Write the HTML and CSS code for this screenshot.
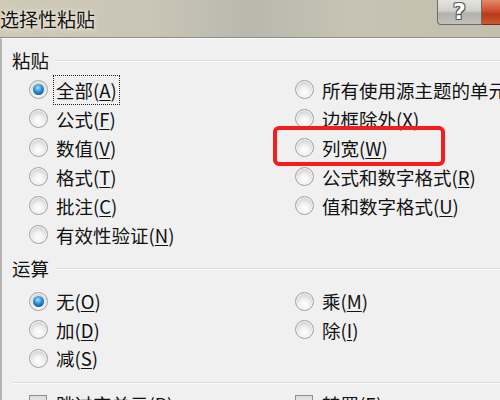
FILE: index.html
```html
<!DOCTYPE html>
<html lang="zh-CN">
<head>
  <meta charset="UTF-8">
  <meta name="viewport" content="width=device-width, initial-scale=1.0">
  <title>选择性粘贴</title>
  <link rel="stylesheet" href="styles.css">
</head>
<body>
  <div class="window">
    <div class="titlebar">
      <span class="title">选择性粘贴</span>
      <div class="caption-buttons">
        <span class="btn-help">?</span>
        <span class="btn-close"></span>
      </div>
    </div>

    <div class="content">
      <div class="group-head">
        <span class="group-label">粘贴</span>
        <span class="group-line"></span>
      </div>
      <div class="options paste">
        <label class="opt"><span class="radio checked"></span><span class="focus">全部(<u>A</u>)</span></label>
        <label class="opt"><span class="radio"></span>所有使用源主题的单元(<u>H</u>)</label>
        <label class="opt"><span class="radio"></span>公式(<u>F</u>)</label>
        <label class="opt"><span class="radio"></span>边框除外(<u>X</u>)</label>
        <label class="opt"><span class="radio"></span>数值(<u>V</u>)</label>
        <label class="opt"><span class="radio"></span>列宽(<u>W</u>)</label>
        <label class="opt"><span class="radio"></span>格式(<u>T</u>)</label>
        <label class="opt"><span class="radio"></span>公式和数字格式(<u>R</u>)</label>
        <label class="opt"><span class="radio"></span>批注(<u>C</u>)</label>
        <label class="opt"><span class="radio"></span>值和数字格式(<u>U</u>)</label>
        <label class="opt"><span class="radio"></span>有效性验证(<u>N</u>)</label>
        <span class="mark"></span>
      </div>

      <div class="group-head op-head">
        <span class="group-label">运算</span>
        <span class="group-line"></span>
      </div>
      <div class="options ops">
        <label class="opt"><span class="radio checked"></span>无(<u>O</u>)</label>
        <label class="opt"><span class="radio"></span>乘(<u>M</u>)</label>
        <label class="opt"><span class="radio"></span>加(<u>D</u>)</label>
        <label class="opt"><span class="radio"></span>除(<u>I</u>)</label>
        <label class="opt"><span class="radio"></span>减(<u>S</u>)</label>
      </div>

      <div class="separator"></div>
      <div class="options checks">
        <label class="opt"><span class="check"></span>跳过空单元(<u>B</u>)</label>
        <label class="opt"><span class="check"></span>转置(<u>E</u>)</label>
      </div>
    </div>
  </div>
</body>
</html>
```

FILE: styles.css
```css
body {
    margin: 0;
    font-family: "Noto Sans CJK SC", "Noto Sans", sans-serif;
    background: #f0f0f0;
}

.window {
    width: 500px;
    height: 400px;
    overflow: hidden;
    background: #f0f0f0;
}

.titlebar {
    height: 37px;
    display: flex;
    justify-content: space-between;
    align-items: flex-start;
    background: linear-gradient(90deg, #cfc9b6 0%, #c9c5b7 30%, #b9b8ad 50%, #c6c3b4 70%, #c2bfae 100%);
    border-bottom: 1px solid #8e8d86;
}

.title {
    font-size: 19px;
    line-height: 20px;
    margin-top: 9px;
    color: #111;
    text-shadow: 0 0 6px #f4f1e6, 0 0 3px #f4f1e6;
}

.caption-buttons {
    display: flex;
    height: 25px;
}

.btn-help {
    width: 43px;
    height: 24px;
    border: 1px solid #6c6c68;
    border-top: none;
    border-radius: 0 0 0 4px;
    background: linear-gradient(#e4e3de 0%, #d2d1cb 45%, #b2b1aa 55%, #c2c1bb 100%);
    color: #fff;
    font: bold 22px/24px "DejaVu Sans", sans-serif;
    text-align: center;
    text-shadow: 0 0 1px #333, 1px 1px 0 #555, -1px -1px 0 #666, 1px -1px 0 #666, -1px 1px 0 #666;
}

.btn-close {
    width: 18px;
    height: 24px;
    border-bottom: 1px solid #6c3020;
    background: linear-gradient(#e08a6c 0%, #d0502e 45%, #b8381a 60%, #cc5a30 100%);
}

.content {
    border-left: 2px solid #b4b4b4;
    border-top: 1px solid #fafafa;
    height: 400px;
}

.group-head {
    display: flex;
    align-items: center;
    height: 30px;
    margin-top: 6px;
    padding-left: 10px;
}

.group-label {
    font-size: 18.5px;
    color: #111;
}

.group-line {
    flex: 1;
    height: 1px;
    margin-left: 6px;
    background: #d5dfe5;
    box-shadow: 0 1px 0 #fbfbfb;
}

.op-head {
    margin-top: 4px;
}

.options {
    display: grid;
    grid-template-columns: 266px 1fr;
    padding-left: 27px;
    grid-auto-rows: 29px;
}

.paste {
    position: relative;
}

.ops {
    margin-top: 4px;
    grid-auto-rows: 28.5px;
}

.opt {
    display: flex;
    align-items: center;
    font-size: 18.5px;
    color: #111;
    white-space: nowrap;
}

.opt u {
    text-underline-offset: 2px;
}

.radio {
    flex: none;
    width: 17px;
    height: 17px;
    margin-right: 8px;
    border: 1px solid #a2a2a2;
    border-radius: 50%;
    background: radial-gradient(circle at 50% 65%, #ffffff 0%, #f2f2f2 35%, #d2d2d2 72%, #e4e4e4 100%);
    box-shadow: inset 0 0 0 1px #f6f6f6;
    position: relative;
}

.radio.checked::after {
    content: "";
    position: absolute;
    left: 3px;
    top: 3px;
    width: 11px;
    height: 11px;
    border-radius: 50%;
    background: radial-gradient(circle at 45% 35%, #b9e4ff 0%, #3b9de0 35%, #0d5aa0 75%, #0a3c70 100%);
}

.check {
    flex: none;
    width: 16px;
    height: 16px;
    margin-right: 9px;
    border: 1px solid #8f8f8f;
    background: linear-gradient(#dcdcdc, #f8f8f8);
}

.focus {
    outline: 1px dotted #222;
    outline-offset: 1px;
    padding: 0 1px;
    margin-left: -1px;
}

/* red annotation box around 列宽 */
.mark {
    position: absolute;
    left: 271px;
    top: 51px;
    width: 164px;
    height: 32px;
    border: 4px solid #f41c1c;
    border-radius: 6px;
}

.separator {
    height: 1px;
    margin: 9px 0 7px 10px;
    background: #d5dfe5;
    box-shadow: 0 1px 0 #fbfbfb;
}
```
